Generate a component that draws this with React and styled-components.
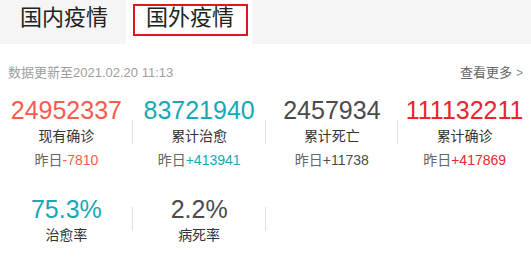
import React from "react";
import styled, { createGlobalStyle } from "styled-components";

const GlobalStyle = createGlobalStyle`
  body {
    margin: 0;
    background: #fff;
    font-family: "Liberation Sans", Arial, "Noto Sans CJK SC", sans-serif;
  }
`;

const Page = styled.div`
  width: 531px;
`;

const TabBar = styled.div`
  display: flex;
  height: 44px;
  background: #f5f5f5;
`;

const Tab = styled.div`
  height: 44px;
  box-sizing: border-box;
  padding: 4px 4px 0 7px;
  background: ${(p) => (p.active ? "#fff" : "transparent")};
  cursor: pointer;
`;

const TabLabel = styled.span`
  display: block;
  box-sizing: border-box;
  height: 32px;
  padding: 0 12px 4px 11px;
  line-height: 24px;
  font-size: 22px;
  color: #222;
  border: 2px solid ${(p) => (p.active ? "#e3141d" : "transparent")};
`;

const Header = styled.div`
  display: flex;
  justify-content: space-between;
  align-items: center;
  height: 22px;
  margin-top: 16px;
  padding: 0 8px;
  font-size: 13px;
`;

const UpdateTime = styled.span`
  color: #9e9e9e;
`;

const More = styled.a`
  color: #666;
  text-decoration: none;
  cursor: pointer;
`;

const Chevron = styled.span`
  margin-left: 4px;
  color: #7b8fa6;
  font-size: 12px;
`;

const Grid = styled.div`
  display: grid;
  grid-template-columns: repeat(4, 1fr);
  row-gap: 23px;
  margin-top: 12px;
`;

const Cell = styled.div`
  position: relative;
  display: flex;
  flex-direction: column;
  align-items: center;

  &::after {
    content: "";
    position: absolute;
    right: 0;
    top: 50%;
    width: 1px;
    height: 24px;
    transform: translateY(-50%);
    background: #e0e0e0;
  }

  &:nth-child(4n)::after {
    display: none;
  }
`;

const Num = styled.div`
  font-size: 25px;
  line-height: 32px;
  color: ${(p) => p.color};
`;

const Label = styled.div`
  font-size: 14px;
  line-height: 20px;
  color: #333;
`;

const Yesterday = styled.div`
  margin-top: 4px;
  font-size: 14px;
  line-height: 20px;
  color: #666;

  em {
    font-style: normal;
    color: ${(p) => p.color};
  }
`;

const stats = [
  { num: "24952337", label: "现有确诊", diff: "-7810", color: "#f85b4d" },
  { num: "83721940", label: "累计治愈", diff: "+413941", color: "#17a8b5" },
  { num: "2457934", label: "累计死亡", diff: "+11738", color: "#4b4b4b" },
  { num: "111132211", label: "累计确诊", diff: "+417869", color: "#e8262f" },
];

const rates = [
  { num: "75.3%", label: "治愈率", color: "#17a8b5" },
  { num: "2.2%", label: "病死率", color: "#4b4b4b" },
];

export default function App() {
  return (
    <Page>
      <GlobalStyle />
      <TabBar>
        <Tab>
          <TabLabel>国内疫情</TabLabel>
        </Tab>
        <Tab active>
          <TabLabel active>国外疫情</TabLabel>
        </Tab>
      </TabBar>
      <Header>
        <UpdateTime>数据更新至2021.02.20 11:13</UpdateTime>
        <More>
          查看更多<Chevron>&gt;</Chevron>
        </More>
      </Header>
      <Grid>
        {stats.map((s) => (
          <Cell key={s.label}>
            <Num color={s.color}>{s.num}</Num>
            <Label>{s.label}</Label>
            <Yesterday color={s.color}>
              昨日<em>{s.diff}</em>
            </Yesterday>
          </Cell>
        ))}
        {rates.map((r) => (
          <Cell key={r.label}>
            <Num color={r.color}>{r.num}</Num>
            <Label>{r.label}</Label>
          </Cell>
        ))}
      </Grid>
    </Page>
  );
}
